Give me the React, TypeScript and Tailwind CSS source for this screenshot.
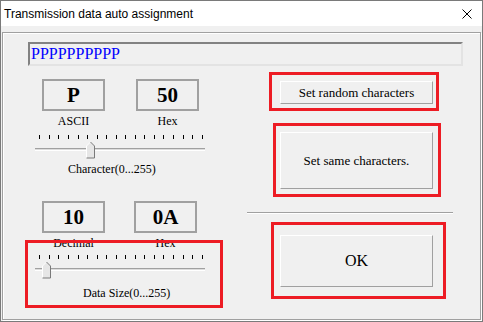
import React from "react";

const Slider = ({ value }: { value: number }) => {
  const ticks = Array.from({ length: 18 }, (_, i) => Math.round(4.3 + i * 9.55) + 0.5);
  const cx = Math.round(4.3 + (value / 255) * 163) + 0.5;
  return (
    <svg width="170" height="26" viewBox="0 0 170 26" className="block">
      {ticks.map((x) => (
        <line key={x} x1={x} y1="1" x2={x} y2="5" stroke="#000" strokeWidth="1" />
      ))}
      <rect x="0" y="14" width="170" height="1" fill="#a0a0a0" />
      <rect x="0" y="15" width="170" height="1" fill="#dcdcdc" />
      <rect x="0" y="16" width="170" height="1" fill="#ffffff" />
      <polygon
        points={`${cx - 4},12 ${cx},8 ${cx + 4},12 ${cx + 4},24 ${cx - 4},24`}
        fill="#e6e6e6"
      />
      <polyline points={`${cx - 4},24 ${cx - 4},12 ${cx},8`} fill="none" stroke="#ffffff" />
      <polyline
        points={`${cx},8 ${cx + 4},12 ${cx + 4},24 ${cx - 4},24`}
        fill="none"
        stroke="#7a7a7a"
      />
    </svg>
  );
};

const ValueBox = ({ text }: { text: string }) => (
  <div className="w-[63px] h-[32px] border-2 border-[#a0a0a0] flex items-center justify-center text-[21px] font-bold leading-none">
    {text}
  </div>
);

const Button = ({ label, h, big }: { label: string; h: string; big?: boolean }) => (
  <div
    className={`ml-[35px] w-[153px] ${h} border border-t-white border-l-white border-r-[#a0a0a0] border-b-[#a0a0a0] flex items-center justify-center ${
      big ? "text-[16px]" : "text-[13px]"
    }`}
  >
    {label}
  </div>
);

export default function App() {
  return (
    <div className="relative w-[483px] h-[322px] overflow-hidden bg-[#f0f0f0] border border-[#7a7a7a] flex flex-col font-['Liberation_Serif',serif] text-black">
      <div className="h-[25px] shrink-0 bg-white flex items-center justify-between pl-[3px] pr-[10px]">
        <span className="font-['Liberation_Sans',sans-serif] text-[12px] text-black">
          Transmission data auto assignment
        </span>
        <svg width="10" height="10" viewBox="0 0 10 10">
          <path d="M0.5 0.5 L9.5 9.5 M9.5 0.5 L0.5 9.5" stroke="#000" strokeWidth="1" />
        </svg>
      </div>

      <div className="mt-[6px] ml-[1px] w-[479px] h-[288px] border border-[#a0a0a0] shadow-[inset_1px_1px_0_#fff,1px_1px_0_#fff] flex flex-col">
        <div className="mt-[9px] ml-[25px] w-[435px] h-[24px] border-2 border-t-[#828282] border-l-[#828282] border-r-[#e3e3e3] border-b-[#e3e3e3] pl-[1px] pt-[1px] text-[16px] leading-[18px] text-[#0000ff]">
          PPPPPPPPPP
        </div>

        <div className="flex">
          <div className="w-[242px] flex flex-col">
            <div className="mt-[13px] ml-[39px] flex gap-[31px]">
              <ValueBox text="P" />
              <ValueBox text="50" />
            </div>
            <div className="mt-[3px] ml-[39px] flex gap-[31px] text-[12px] leading-[14px]">
              <span className="w-[63px] text-center">ASCII</span>
              <span className="w-[63px] text-center">Hex</span>
            </div>
            <div className="mt-[6px] ml-[32px]">
              <Slider value={80} />
            </div>
            <div className="mt-[2px] ml-[65px] text-[12px] leading-[14px]">Character(0...255)</div>

            <div className="mt-[25px] ml-[39px] flex gap-[29px]">
              <ValueBox text="10" />
              <ValueBox text="0A" />
            </div>
            <div className="mt-[3px] ml-[39px] flex gap-[29px] text-[12px] leading-[14px]">
              <span className="w-[63px] text-center">Decimal</span>
              <span className="w-[63px] text-center">Hex</span>
            </div>
            <div className="mt-[4px] ml-[32px]">
              <Slider value={10} />
            </div>
            <div className="mt-[6px] ml-[80px] text-[12px] leading-[14px]">Data Size(0...255)</div>
          </div>

          <div className="flex flex-col">
            <div className="mt-[15px]">
              <Button label="Set random characters" h="h-[23px]" />
            </div>
            <div className="mt-[28px]">
              <Button label="Set same characters." h="h-[57px]" />
            </div>
            <div className="mt-[23px] ml-[2px] w-[206px] h-[2px] border-t border-t-[#a0a0a0] border-b border-b-white" />
            <div className="mt-[21px]">
              <Button label="OK" h="h-[52px]" big />
            </div>
          </div>
        </div>
      </div>

      {/* red annotation frames drawn over the dialog */}
      <div className="absolute left-[268px] top-[71px] w-[170px] h-[39px] border-[3px] border-[#ed1c24] pointer-events-none" />
      <div className="absolute left-[272px] top-[122px] w-[168px] h-[74px] border-[3px] border-[#ed1c24] pointer-events-none" />
      <div className="absolute left-[270px] top-[221px] w-[175px] h-[77px] border-[3px] border-[#ed1c24] pointer-events-none" />
      <div className="absolute left-[24px] top-[239px] w-[198px] h-[68px] border-[3px] border-[#ed1c24] pointer-events-none" />
    </div>
  );
}
